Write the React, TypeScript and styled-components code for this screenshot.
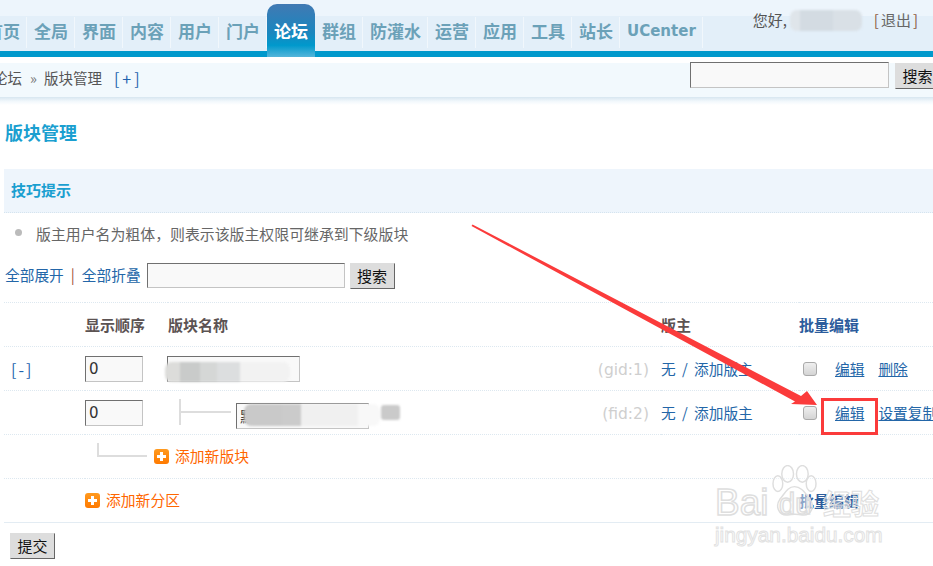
import React from "react";
import styled, { createGlobalStyle } from "styled-components";

const tabs = ["首页", "全局", "界面", "内容", "用户", "门户", "论坛", "群组", "防灌水", "运营", "应用", "工具", "站长", "UCenter"];

const App = () => {
  return (
    <Page>
      <GlobalStyle />
      <Header>
        <Nav>
          {tabs.map((tab) => (
            <Tab key={tab} $active={tab === "论坛"} $latin={tab === "UCenter"}>
              {tab}
            </Tab>
          ))}
        </Nav>
        <UserInfo>
          <span>您好,</span>
          <Logout>
            <Bracket>[</Bracket>退出<Bracket>]</Bracket>
          </Logout>
        </UserInfo>
      </Header>

      <Crumbs>
        <CrumbTrail>
          <span>论坛</span>
          <CrumbSeparator>»</CrumbSeparator>
          <span>版块管理</span>
          <CrumbAdd>[+]</CrumbAdd>
        </CrumbTrail>
        <CrumbSearch>
          <TextInput $width={199} />
          <CrumbButton>搜索</CrumbButton>
        </CrumbSearch>
      </Crumbs>
      <CrumbShadow />

      <Title>版块管理</Title>

      <Tips>
        <TipsHead>技巧提示</TipsHead>
        <TipLine>版主用户名为粗体，则表示该版主权限可继承到下级版块</TipLine>
      </Tips>

      <SearchRow>
        <PlainLink>全部展开</PlainLink>
        <Pipe>|</Pipe>
        <PlainLink>全部折叠</PlainLink>
        <TextInput $width={198} />
        <GreyButton>搜索</GreyButton>
      </SearchRow>

      <Grid>
        <colgroup>
          <col width={81} />
          <col width={83} />
          <col width={493} />
          <col width={138} />
          <col width={140} />
        </colgroup>
        <tbody>
          <tr>
            <td />
            <HeadCell>显示顺序</HeadCell>
            <HeadCell>版块名称</HeadCell>
            <HeadCell>版主</HeadCell>
            <BatchHead>批量编辑</BatchHead>
          </tr>
          <tr>
            <td>
              <Toggle>[-]</Toggle>
            </td>
            <td>
              <OrderInput defaultValue="0" />
            </td>
            <td>
              <NameCell>
                <NameInput />
                <ForumId>(gid:1)</ForumId>
              </NameCell>
            </td>
            <ModCell>
              无 / 添加版主
            </ModCell>
            <td>
              <Actions>
                <CheckBox type="checkbox" />
                <ActionLink>编辑</ActionLink>
                <ActionLink>删除</ActionLink>
              </Actions>
            </td>
          </tr>
          <tr>
            <td />
            <td>
              <OrderInput defaultValue="0" />
            </td>
            <td>
              <NameCell>
                <ChildName>
                  <TreeBranch />
                  <NameInput defaultValue="默" />
                </ChildName>
                <ForumId>(fid:2)</ForumId>
              </NameCell>
            </td>
            <ModCell>
              无 / 添加版主
            </ModCell>
            <td>
              <Actions>
                <CheckBox type="checkbox" />
                <ActionLink>编辑</ActionLink>
                <ActionLink>设置复制</ActionLink>
              </Actions>
            </td>
          </tr>
          <tr>
            <td />
            <td colSpan={4}>
              <AddRow $indent={12}>
                <TreeCorner />
                <AddIcon />
                <AddLink>添加新版块</AddLink>
              </AddRow>
            </td>
          </tr>
          <LastRow>
            <td />
            <td colSpan={3}>
              <AddRow $indent={0}>
                <AddIcon />
                <AddLink>添加新分区</AddLink>
              </AddRow>
            </td>
            <BatchHead>批量编辑</BatchHead>
          </LastRow>
        </tbody>
      </Grid>

      <SubmitRow>
        <GreyButton>提交</GreyButton>
      </SubmitRow>

      {/* things pasted on top of the screenshot */}
      <Smudge $x={790} $y={10} $w={72} $h={21} $bands="#dfe5ea 0 14%, #d3dbe2 14% 60%, #d9e0e6 60% 100%" />
      <Smudge $x={165} $y={362} $w={125} $h={20} $bands="#dcdcda 0 12%, #c9cbca 12% 28%, #d5d7d6 28% 42%, #dcdedf 42% 60%, #f2f2f2 60% 100%" />
      <Smudge $x={244} $y={404} $w={136} $h={22} $bands="#c9c9c9 0 28%, #cbcbcb 28% 42%, #f0f0f0 42% 84%, #f8f8f8 84% 100%" />
      <Smudge $x={381} $y={405} $w={19} $h={15} $radius={3} $bands="#cacaca 0 100%" />

      <Arrow viewBox="0 0 933 566" aria-hidden="true">
        <polygon points="472.5,224.5 801,396 807,391 817,405 791,404 795,401.5 471.5,226" fill="#fb3b3b" />
      </Arrow>
      <Highlight />

      <Watermark>
        <Paw viewBox="0 0 46 54" aria-hidden="true">
          <g fill="rgba(255,255,255,0.45)" stroke="#dedede" strokeWidth="1.5">
            <ellipse cx="6" cy="19" rx="5" ry="8" />
            <ellipse cx="16" cy="9" rx="6" ry="8.5" />
            <ellipse cx="31" cy="9" rx="6" ry="8.5" />
            <ellipse cx="40" cy="19" rx="5" ry="8" />
            <path d="M23 22c7 0 11 7 16 13 5 7 1 17-8 16-5-1-10-1-15 0-9 1-13-9-8-16 5-6 8-13 15-13z" />
          </g>
        </Paw>
        <LogoWord>Bai</LogoWord>
        <LogoTail>du</LogoTail>
        <LogoCjk>经验</LogoCjk>
        <LogoUrl>jingyan.baidu.com</LogoUrl>
      </Watermark>
    </Page>
  );
};

const GlobalStyle = createGlobalStyle`
  html, body {
    margin: 0;
    padding: 0;
    background: #fff;
    overflow: hidden;
  }
`;

const Page = styled.div`
  position: relative;
  width: 933px;
  height: 566px;
  overflow: hidden;
  font-family: "Noto Sans CJK SC", "Liberation Sans", sans-serif;
  font-size: 15px;
  color: #555;
`;

const Header = styled.header`
  display: flex;
  justify-content: space-between;
  height: 51px;
  background: linear-gradient(#edf5fc 0 16px, #e3eff9 16px);
  border-bottom: 6px solid #0099cc;
`;

const Nav = styled.nav`
  display: flex;
  align-items: flex-end;
  margin-left: -21px;
`;

const Tab = styled.div<{ $active?: boolean; $latin?: boolean }>`
  box-sizing: border-box;
  padding: ${({ $active }) => ($active ? "0 7px" : "0 6px 0 7px")};
  white-space: nowrap;
  font-weight: 700;
  text-align: center;
  font-size: ${({ $latin }) => ($latin ? "15px" : "17px")};
  font-family: ${({ $latin }) => ($latin ? '"DejaVu Sans", sans-serif' : "inherit")};
  color: ${({ $active }) => ($active ? "#fff" : "#6ba1b8")};
  height: ${({ $active }) => ($active ? "53px" : "31px")};
  line-height: ${({ $active }) => ($active ? "53px" : "28px")};
  margin-bottom: ${({ $active }) => ($active ? "-6px" : "3px")};
  border-right: ${({ $active }) => ($active ? "0" : "1px solid #f1f7fc")};
  border-radius: ${({ $active }) => ($active ? "10px 10px 0 0" : "0")};
  background: ${({ $active }) =>
    $active ? "linear-gradient(#4179b3 0, #1a87bf 55%, #0099cc 78%, #55b5da 100%)" : "transparent"};
`;

const UserInfo = styled.div`
  display: flex;
  gap: 85px;
  padding: 11px 13px 0 0;
  font-size: 15px;
  line-height: 18px;
  color: #555;
`;

const Logout = styled.span`
  color: #666;
`;

const Bracket = styled.span`
  margin: 0 2px;
  color: #8a5a44;
`;

const Crumbs = styled.div`
  display: flex;
  justify-content: space-between;
  align-items: flex-start;
  height: 34px;
  margin-top: 6px;
  background: #f2f9fd;
`;

const CrumbTrail = styled.div`
  display: flex;
  align-items: center;
  height: 29px;
  margin-left: -7px;
  font-size: 14.5px;
  color: #555;
`;

const CrumbSeparator = styled.span`
  margin: 0 7px 0 8px;
  color: #777;
`;

const CrumbAdd = styled.span`
  margin-left: 12px;
  color: #1f63ad;
  font-size: 16px;
  letter-spacing: 3px;
`;

const CrumbSearch = styled.div`
  display: flex;
  gap: 6px;
  width: 243px;
  flex: none;
  margin-top: -1px;
`;

const CrumbShadow = styled.div`
  height: 8px;
  background: linear-gradient(#d7e6f0 0, #f2f8fc 55%, #fff 100%);
`;

const Title = styled.h1`
  margin: 14px 0 0 5px;
  font-size: 18px;
  line-height: 26px;
  font-weight: 700;
  color: #1a9fd0;
`;

const Tips = styled.section`
  margin: 24px 0 0 4px;
`;

const TipsHead = styled.h2`
  box-sizing: border-box;
  height: 44px;
  margin: 0;
  padding-left: 7px;
  font-size: 15px;
  line-height: 41px;
  font-weight: 700;
  color: #1a9fd0;
  background: #eef5fc;
  border-bottom: 1px dotted #d5e4ef;
`;

const TipLine = styled.p`
  position: relative;
  margin: 0;
  padding-left: 32px;
  height: 45px;
  line-height: 41px;
  font-size: 14.9px;
  color: #666;

  &::before {
    content: "";
    position: absolute;
    left: 11px;
    top: 16px;
    width: 7px;
    height: 7px;
    border-radius: 50%;
    background: #bbb;
  }
`;

const SearchRow = styled.div`
  display: flex;
  align-items: center;
  height: 25px;
  margin: 5px 0 0 5px;
`;

const PlainLink = styled.a`
  margin-bottom: 3px;
  color: #2366a8;
  font-size: 14.7px;
`;

const Pipe = styled.span`
  margin: 0 7px 3px;
  color: #a5533c;
`;

const TextInput = styled.input<{ $width: number }>`
  box-sizing: border-box;
  width: ${({ $width }) => $width}px;
  height: 26px;
  margin-right: 0;
  padding: 2px 3px;
  background: #f9f9f9;
  border: 1px solid #c4c4c4;
  border-top-color: #707070;
  border-left-color: #707070;
  font: 15px "Liberation Sans", sans-serif;

  ${SearchRow} & {
    height: 25px;
    margin: 0 5px 0 6px;
  }
`;

const GreyButton = styled.button`
  box-sizing: border-box;
  flex: none;
  width: 45px;
  height: 26px;
  padding: 0;
  background: #ddd;
  border: 1px solid #ddd;
  border-right-color: #666;
  border-bottom-color: #666;
  color: #111;
  font: 15px "Noto Sans CJK SC", sans-serif;
  line-height: 22px;
  white-space: nowrap;
`;

const CrumbButton = styled(GreyButton)`
  margin-top: 1px;
`;

const Grid = styled.table`
  table-layout: fixed;
  width: 935px;
  margin: 14px 0 0 4px;
  border-collapse: collapse;

  td {
    height: 43px;
    padding: 0;
    border-top: 1px dotted #dde8f0;
    vertical-align: middle;
  }
`;

const LastRow = styled.tr`
  td {
    border-bottom: 1px solid #e3ecf3;
  }
`;

const HeadCell = styled.td`
  font-size: 15px;
  font-weight: 700;
  color: #5c5353;
`;

const BatchHead = styled.td`
  font-size: 15px;
  font-weight: 700;
  color: #2c5c9c;
`;

const Toggle = styled.span`
  margin-left: 7px;
  color: #1f63ad;
  font-size: 16px;
  letter-spacing: 2px;
`;

const OrderInput = styled.input`
  box-sizing: border-box;
  display: block;
  width: 58px;
  height: 26px;
  padding: 0 3px;
  background: #f9f9f9;
  border: 1px solid #c4c4c4;
  border-top-color: #707070;
  border-left-color: #707070;
  color: #333;
  font: 15px "DejaVu Sans", sans-serif;
`;

const NameCell = styled.div`
  display: flex;
  justify-content: space-between;
  align-items: center;
  padding-right: 12px;
`;

const NameInput = styled.input`
  box-sizing: border-box;
  display: block;
  width: 133px;
  height: 26px;
  margin-left: -1px;
  padding: 0 3px;
  background: #f9f9f9;
  border: 1px solid #c4c4c4;
  border-top-color: #707070;
  border-left-color: #707070;
  color: #333;
  font: 15px "Noto Sans CJK SC", sans-serif;
`;

const ChildName = styled.div`
  display: flex;
  align-items: flex-end;
  gap: 6px;
  margin: 2px 0 0 11px;
`;

const TreeBranch = styled.span`
  position: relative;
  display: block;
  width: 50px;
  height: 26px;
  margin-bottom: 4px;
  border-left: 2px solid #ddd;

  &::after {
    content: "";
    position: absolute;
    left: 0;
    right: 0;
    top: 12px;
    height: 2px;
    background: #ddd;
  }
`;

const ForumId = styled.span`
  margin-top: 3px;
  font: 15.5px "DejaVu Sans", sans-serif;
  color: #cfcfcf;
`;

const ModCell = styled.td`
  color: #2366a8;
  font-size: 14.7px;
  word-spacing: 3px;
  white-space: nowrap;
`;

const Actions = styled.div`
  display: flex;
  align-items: center;
  white-space: nowrap;
`;

const CheckBox = styled.input`
  appearance: none;
  box-sizing: border-box;
  flex: none;
  width: 14px;
  height: 14px;
  margin: 0 18px 0 4px;
  border: 1px solid #aaa;
  border-radius: 3px;
  background: linear-gradient(#efefef, #d4d4d4);
`;

const ActionLink = styled.a`
  flex: none;
  margin-right: 14px;
  color: #2366a8;
  font-size: 14.7px;
  text-decoration: underline;
`;

const AddRow = styled.div<{ $indent: number }>`
  display: flex;
  align-items: center;
  padding-left: ${({ $indent }) => $indent}px;
`;

const TreeCorner = styled.span`
  display: block;
  box-sizing: border-box;
  width: 50px;
  height: 14px;
  margin: -14px 7px 0 0;
  border-left: 2px solid #ddd;
  border-bottom: 2px solid #ddd;
`;

const AddIcon = styled.span`
  position: relative;
  display: block;
  flex: none;
  width: 15px;
  height: 15px;
  margin-right: 6px;
  border-radius: 3px;
  background: linear-gradient(#ff9a1f, #ff7a00);

  &::before,
  &::after {
    content: "";
    position: absolute;
    background: #fff;
  }

  &::before {
    left: 3px;
    right: 3px;
    top: 6px;
    height: 3px;
  }

  &::after {
    top: 3px;
    bottom: 3px;
    left: 6px;
    width: 3px;
  }
`;

const AddLink = styled.a`
  margin-bottom: 2px;
  color: #ff6600;
  font-size: 14.8px;
`;

const SubmitRow = styled.div`
  margin: 10px 0 0 10px;
`;

const Smudge = styled.div<{ $x: number; $y: number; $w: number; $h: number; $radius?: number; $bands: string }>`
  position: absolute;
  left: ${({ $x }) => $x}px;
  top: ${({ $y }) => $y}px;
  width: ${({ $w }) => $w}px;
  height: ${({ $h }) => $h}px;
  border-radius: ${({ $radius }) => $radius ?? 7}px;
  filter: blur(1px);
  background: linear-gradient(90deg, ${({ $bands }) => $bands});
`;

const Arrow = styled.svg`
  position: absolute;
  left: 0;
  top: 0;
  width: 933px;
  height: 566px;
  pointer-events: none;
`;

const Highlight = styled.div`
  position: absolute;
  left: 821px;
  top: 398px;
  width: 51px;
  height: 31px;
  border: 3px solid #fb3b3b;
`;

const Watermark = styled.div`
  position: absolute;
  left: 715px;
  top: 465px;
  width: 170px;
  height: 82px;
  pointer-events: none;
`;

const Paw = styled.svg`
  position: absolute;
  left: 57px;
  top: 0;
  width: 45px;
  height: 53px;
`;

const LogoWord = styled.span`
  position: absolute;
  left: 0;
  top: 16px;
  font: 400 37px/44px "Liberation Sans", sans-serif;
  color: rgba(255, 255, 255, 0.45);
  -webkit-text-stroke: 1.5px #dedede;
`;

const LogoTail = styled.span`
  position: absolute;
  left: 64px;
  top: 21px;
  font: 400 29px/36px "Liberation Sans", sans-serif;
  color: rgba(255, 255, 255, 0.45);
  -webkit-text-stroke: 1.5px #dedede;
`;

const LogoCjk = styled.span`
  position: absolute;
  left: 108px;
  top: 21px;
  font: 700 28px/34px "Noto Sans CJK SC", sans-serif;
  color: rgba(255, 255, 255, 0.4);
  -webkit-text-stroke: 1px #dedede;
`;

const LogoUrl = styled.span`
  position: absolute;
  left: 0;
  top: 58px;
  font: 400 20.8px/24px "Liberation Sans", sans-serif;
  color: rgba(255, 255, 255, 0.4);
  -webkit-text-stroke: 1px #e2e2e2;
  white-space: nowrap;
`;

export default App;
